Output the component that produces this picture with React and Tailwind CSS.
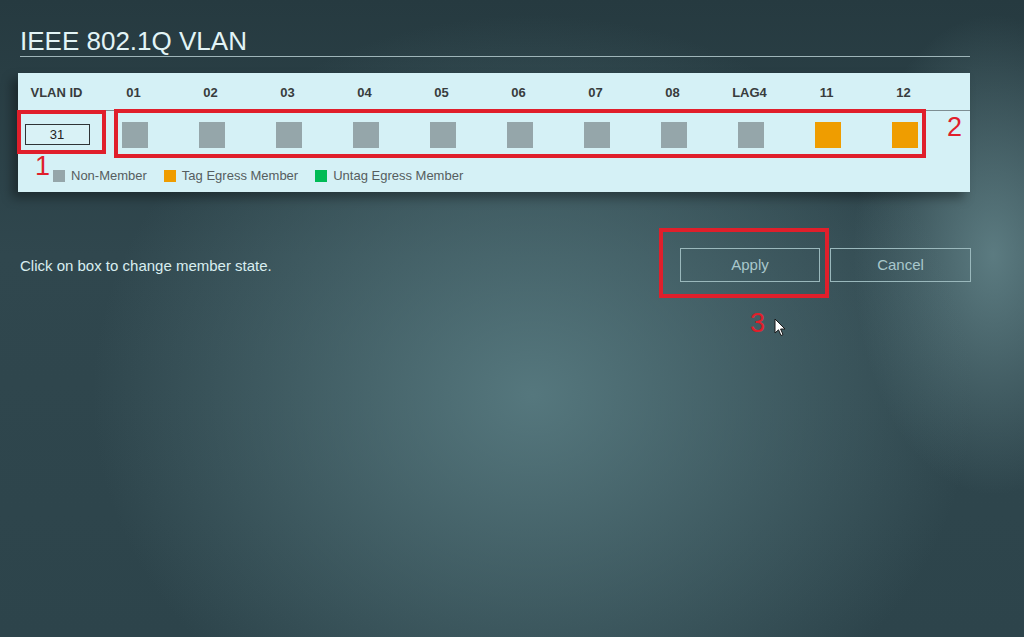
const PORTS = [
  { label: "01", state: "none" },
  { label: "02", state: "none" },
  { label: "03", state: "none" },
  { label: "04", state: "none" },
  { label: "05", state: "none" },
  { label: "06", state: "none" },
  { label: "07", state: "none" },
  { label: "08", state: "none" },
  { label: "LAG4", state: "none" },
  { label: "11", state: "tag" },
  { label: "12", state: "tag" },
];

const STATE_CLASS = {
  none: "bg-[#95a6aa]",
  tag: "bg-[#ef9d00]",
  untag: "bg-[#00bb55]",
};

function Cursor() {
  return (
    <svg width="12" height="19" viewBox="0 0 12 19" className="absolute left-[774px] top-[318px]">
      <path d="M1 1 L1 15 L4.5 11.8 L7 17.5 L9 16.6 L6.6 11 L11 11 Z" fill="#ffffff" stroke="#1a1a1a" strokeWidth="1" strokeLinejoin="round" />
    </svg>
  );
}

export default function App() {
  return (
    <div
      className="relative w-[1024px] h-[637px] overflow-hidden bg-[#2b4148] font-['Liberation_Sans',Arial,sans-serif]"
      style={{
        backgroundImage:
          "radial-gradient(ellipse 440px 380px at 52% 62%, rgba(92,128,134,0.85), rgba(92,128,134,0) 100%), radial-gradient(ellipse 140px 240px at 97% 40%, rgba(110,145,150,0.7), rgba(110,145,150,0) 100%), linear-gradient(180deg, #263a40 0%, #30474e 40%, #2d444b 100%)",
      }}
    >
      {/* Title */}
      <div className="px-[20px] pt-[26px]">
        <h1 className="text-[26px] leading-[30px] text-[#e2f4f6] font-normal">IEEE 802.1Q VLAN</h1>
        <div className="h-px w-[950px] bg-[#9fb5b9]" />
      </div>

      {/* VLAN table */}
      <div className="ml-[18px] mt-[16px] w-[952px] bg-[#d5f1f6] shadow-[-6px_6px_10px_rgba(0,0,0,0.35)]">
        <div className="grid grid-cols-[repeat(12,77px)] h-[38px] items-center border-b border-[#7d8e92] pt-[3px] text-[13px] font-bold text-[#383c3d]">
          <div className="text-center">VLAN ID</div>
          {PORTS.map((p) => (
            <div key={p.label} className="text-center">{p.label}</div>
          ))}
        </div>
        <div className="grid grid-cols-[repeat(12,77px)] h-[47px] items-center">
          <div className="flex justify-center pl-[1px]">
            <div className="w-[65px] h-[21px] border border-[#2f3335] bg-[#d9f2f6] flex items-center justify-center text-[13px] text-[#222]">31</div>
          </div>
          {PORTS.map((p) => (
            <div key={p.label} className="flex justify-center pl-[3px]">
              <div className={`w-[26px] h-[26px] ${STATE_CLASS[p.state]}`} />
            </div>
          ))}
        </div>
        <div className="h-[34px] flex items-center pl-[35px] pt-[2px] text-[13px] text-[#565e60]">
          <span className="w-[12px] h-[12px] bg-[#95a6aa] mr-[6px]" />
          <span className="mr-[17px]">Non-Member</span>
          <span className="w-[12px] h-[12px] bg-[#ef9d00] mr-[6px]" />
          <span className="mr-[17px]">Tag Egress Member</span>
          <span className="w-[12px] h-[12px] bg-[#00bb55] mr-[6px]" />
          <span>Untag Egress Member</span>
        </div>
      </div>

      {/* Hint + buttons */}
      <div className="flex items-center justify-between mt-[56px] pl-[20px] pr-[53px]">
        <p className="text-[15px] text-[#d9eef0] pt-[3px]">Click on box to change member state.</p>
        <div className="flex gap-[10px]">
          <button className="w-[140px] h-[34px] border border-[#9ab8bc] text-[15px] text-[#a9c8cc] bg-transparent">Apply</button>
          <button className="w-[141px] h-[34px] border border-[#9ab8bc] text-[15px] text-[#a9c8cc] bg-transparent">Cancel</button>
        </div>
      </div>

      {/* Annotations */}
      <div className="absolute left-[17px] top-[110px] w-[89px] h-[44px] border-[4px] border-[#e01f2b]" />
      <div className="absolute left-[114px] top-[109px] w-[812px] h-[49px] border-[4px] border-[#e01f2b]" />
      <div className="absolute left-[659px] top-[228px] w-[170px] h-[70px] border-[4px] border-[#e01f2b]" />
      <span className="absolute left-[35px] top-[151px] text-[27px] leading-[30px] text-[#e01f2b]">1</span>
      <span className="absolute left-[947px] top-[112px] text-[27px] leading-[30px] text-[#e01f2b]">2</span>
      <span className="absolute left-[750px] top-[308px] text-[27px] leading-[30px] text-[#e01f2b]">3</span>
      <Cursor />
    </div>
  );
}
